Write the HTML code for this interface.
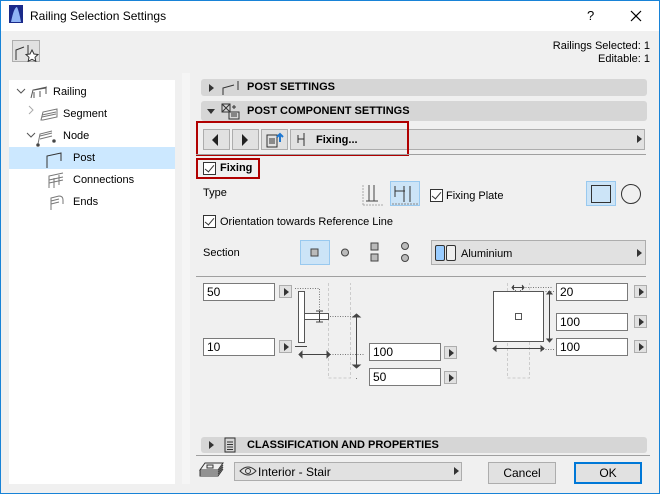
<!DOCTYPE html>
<html><head><meta charset="utf-8"><style>
*{box-sizing:border-box;margin:0;padding:0}
body{width:660px;height:494px;overflow:hidden;font-family:"Liberation Sans",sans-serif;font-size:11px;color:#000;background:#f0f0f0;position:relative}
.a{position:absolute}
.win{left:0;top:0;width:660px;height:494px;border:1px solid #1883d7}
.title{left:1px;top:1px;width:658px;height:30px;background:#fff}
.hdr{background:#d6d6d6;border-radius:3px;height:17px;font-weight:bold;font-size:11px;line-height:17px}
.btn{background:#e1e1e1;border:1px solid #adadad}
.inp{background:#fff;border:1px solid #7a7a7a;height:18px;line-height:16px;padding-left:3px;font-size:12px}
.sb{width:13px;height:13px;background:#e1e1e1;border:1px solid #adadad}
.sb:after{content:"";position:absolute;left:4px;top:2px;border-left:5px solid #333;border-top:4px solid transparent;border-bottom:4px solid transparent}
.cb{width:13px;height:13px;border:1px solid #333;background:#fff}
.cb:after{content:"";position:absolute;left:3px;top:0px;width:4px;height:8px;border-right:1.5px solid #333;border-bottom:1.5px solid #333;transform:rotate(40deg)}
.tri{border-left:5px solid #333;border-top:4px solid transparent;border-bottom:4px solid transparent;width:0;height:0}
.sel{background:#cce4f7;border:1px solid #99c9ef}
</style></head><body>
<div class="a win"></div>
<div class="a title"></div>
<svg class="a" style="left:9px;top:5px" width="14" height="18"><rect x="0" y="0" width="14" height="18" fill="#1a2a8a"/><path d="M2 17 Q5 2 8 2 Q10 6 12 17Z" fill="#8fb4f5"/></svg>
<div class="a" style="left:30px;top:9px;font-size:12px">Railing Selection Settings</div>
<div class="a" style="left:587px;top:8px;font-size:13px">?</div>
<svg class="a" style="left:630px;top:10px" width="12" height="12"><path d="M1 1L11 11M11 1L1 11" stroke="#000" stroke-width="1.2"/></svg>

<div class="a" style="left:12px;top:40px;width:28px;height:22px;background:#e1e1e1;border:1px solid #adadad"></div>
<svg class="a" style="left:14px;top:42px" width="26" height="20"><path d="M2 18V8L10 5M14 3V12" stroke="#333" fill="none"/><path d="M18 8l2 4 4 .5-3 2.8.8 4-3.8-2-3.8 2 .8-4-3-2.8 4-.5z" stroke="#333" fill="#fff"/></svg>
<div class="a" style="right:10px;top:40px;text-align:right;line-height:13px">Railings Selected: 1<br>Editable: 1</div>

<div class="a" style="left:9px;top:80px;width:166px;height:404px;background:#fff"></div>
<div class="a" style="left:182px;top:73px;width:8px;height:411px;background:#f5f5f5"></div>
<div class="a" style="left:9px;top:147px;width:166px;height:22px;background:#cce8ff"></div>
<svg class="a" style="left:14px;top:84px" width="160" height="130" fill="none" stroke="#555">
<path d="M3 5l4 4 4-4"/><path d="M17 14l2-8 14-3M20 6l12-2M20 8v6M26 7v6M32 4v6" />
<path d="M15 22l4 4-4 4" stroke="#aaa"/><path d="M27 36l2-8 14-3v8l-14 3zM28 31l14-3M28 33l14-3" stroke="#777"/>
<path d="M13 49l4 4 4-4"/><path d="M24 60l2-10 12-3M26 52l12-3M26 55l12-3" stroke="#777"/><circle cx="24" cy="61" r="1.3" fill="#333"/><circle cx="40" cy="57" r="1.3" fill="#333"/>
<path d="M33 84v-12l14-3v8" stroke="#333"/>
<path d="M35 104v-12l14-3M35 96l14-3M35 99l14-3M40 104v-10M45 101v-10" stroke="#777"/>
<path d="M37 126v-12l8-2q4 0 4 4v4M37 117l8-2M37 120l8-2" stroke="#777"/>
</svg>
<div class="a" style="left:53px;top:86px">Railing</div>
<div class="a" style="left:63px;top:108px">Segment</div>
<div class="a" style="left:63px;top:130px">Node</div>
<div class="a" style="left:73px;top:152px">Post</div>
<div class="a" style="left:73px;top:174px">Connections</div>
<div class="a" style="left:73px;top:196px">Ends</div>

<div class="a hdr" style="left:201px;top:79px;width:446px;padding-left:46px">POST SETTINGS</div>
<div class="a tri" style="left:209px;top:84px"></div>
<svg class="a" style="left:222px;top:80px" width="18" height="16"><path d="M1 15V8L12 5M16 1v9" stroke="#333" fill="none"/></svg>
<div class="a hdr" style="left:201px;top:101px;width:446px;height:20px;line-height:20px;padding-left:46px">POST COMPONENT SETTINGS</div>
<div class="a" style="left:207px;top:109px;border-top:5px solid #333;border-left:4px solid transparent;border-right:4px solid transparent"></div>
<svg class="a" style="left:221px;top:103px" width="20" height="17" fill="none" stroke="#333"><rect x="1" y="1" width="8" height="8"/><path d="M1 1l8 8M9 1L1 9"/><rect x="8" y="9" width="10" height="7"/><path d="M10 11h6M10 13h6M13 2v4M11 4h4"/></svg>

<div class="a btn" style="left:203px;top:129px;width:27px;height:21px"></div>
<div class="a" style="left:212px;top:134px;border-right:6px solid #222;border-top:6px solid transparent;border-bottom:6px solid transparent"></div>
<div class="a btn" style="left:232px;top:129px;width:27px;height:21px"></div>
<div class="a" style="left:242px;top:134px;border-left:6px solid #222;border-top:6px solid transparent;border-bottom:6px solid transparent"></div>
<div class="a btn" style="left:261px;top:129px;width:27px;height:21px"></div>
<svg class="a" style="left:265px;top:131px" width="20" height="17" fill="none"><rect x="2" y="4" width="10" height="12" stroke="#333"/><path d="M4 8h6M4 10h6M4 12h6" stroke="#333"/><path d="M15 11V3M12 6l3-3 3 3" stroke="#1f78d1" stroke-width="2"/></svg>
<div class="a btn" style="left:290px;top:129px;width:355px;height:21px"></div>
<svg class="a" style="left:297px;top:132px" width="12" height="15" fill="none" stroke="#333"><path d="M1 3v8M1 7h6M7 1v13" /></svg>
<div class="a" style="left:316px;top:134px;font-weight:bold">Fixing...</div>
<div class="a tri" style="left:637px;top:135px"></div>
<div class="a" style="left:196px;top:121px;width:213px;height:35px;border:2px solid #b00000"></div>
<div class="a" style="left:196px;top:154px;width:450px;height:1px;background:#a0a0a0"></div>
<div class="a" style="left:196px;top:158px;width:64px;height:21px;border:2px solid #b00000"></div>
<div class="a cb" style="left:203px;top:162px"></div>
<div class="a" style="left:220px;top:162px;font-weight:bold">Fixing</div>

<div class="a" style="left:203px;top:187px">Type</div>
<svg class="a" style="left:361px;top:181px" width="60" height="26" fill="none" stroke="#444"><path d="M2 4v20M2 24h20" stroke="#aaa" stroke-dasharray="2 1"/><path d="M8 4v16M13 4v16M5 20h12" /></svg>
<div class="a sel" style="left:390px;top:181px;width:30px;height:25px"></div>
<svg class="a" style="left:391px;top:182px" width="30" height="24" fill="none" stroke="#333"><path d="M4 4v11M4 9h10M13 4v16M19 4v16" /><path d="M1 22h26" stroke="#888" stroke-dasharray="2 1"/></svg>
<div class="a cb" style="left:430px;top:189px"></div>
<div class="a" style="left:446px;top:190px">Fixing Plate</div>
<div class="a sel" style="left:586px;top:181px;width:30px;height:25px"></div>
<div class="a" style="left:591px;top:185px;width:20px;height:18px;border:1px solid #333"></div>
<div class="a" style="left:621px;top:184px;width:20px;height:20px;border:1px solid #333;border-radius:50%"></div>
<div class="a cb" style="left:203px;top:215px"></div>
<div class="a" style="left:220px;top:216px">Orientation towards Reference Line</div>

<div class="a" style="left:203px;top:247px">Section</div>
<div class="a sel" style="left:300px;top:240px;width:30px;height:25px"></div>
<svg class="a" style="left:300px;top:240px" width="120" height="26" fill="#bbb" stroke="#444"><rect x="11" y="9" width="7" height="7"/><circle cx="45" cy="12.5" r="3.5"/><rect x="71" y="3" width="7" height="7"/><rect x="71" y="14" width="7" height="7"/><circle cx="105" cy="6" r="3.5"/><circle cx="105" cy="18" r="3.5"/></svg>
<div class="a btn" style="left:431px;top:240px;width:215px;height:25px"></div>
<div class="a" style="left:435px;top:245px;width:10px;height:16px;background:#99ccff;border:1px solid #333;border-radius:2px"></div>
<div class="a" style="left:446px;top:245px;width:10px;height:16px;background:#eee;border:1px solid #333;border-radius:2px"></div>
<div class="a" style="left:461px;top:248px">Aluminium</div>
<div class="a tri" style="left:637px;top:249px"></div>
<div class="a" style="left:196px;top:276px;width:450px;height:1px;background:#a0a0a0"></div>

<div class="a inp" style="left:203px;top:283px;width:72px">50</div><div class="a sb" style="left:279px;top:285px"></div>
<div class="a inp" style="left:203px;top:338px;width:72px">10</div><div class="a sb" style="left:279px;top:340px"></div>
<div class="a inp" style="left:369px;top:343px;width:72px">100</div><div class="a sb" style="left:444px;top:346px"></div>
<div class="a inp" style="left:369px;top:368px;width:72px">50</div><div class="a sb" style="left:444px;top:371px"></div>
<div class="a inp" style="left:556px;top:283px;width:72px">20</div><div class="a sb" style="left:634px;top:285px"></div>
<div class="a inp" style="left:556px;top:313px;width:72px">100</div><div class="a sb" style="left:634px;top:315px"></div>
<div class="a inp" style="left:556px;top:338px;width:72px">100</div><div class="a sb" style="left:634px;top:340px"></div>

<svg class="a" style="left:290px;top:280px" width="270" height="100" fill="none" stroke-width="1">
<g stroke="#ccc" stroke-dasharray="3 2"><path d="M38.5 3v95H60.5V3"/><path d="M217.5 3v95H239.5V3"/></g>
<g stroke="#777" stroke-dasharray="1 1.5"><path d="M5 8.5h24.5V31"/><path d="M40 36.5h26.5"/><path d="M40 74.5h34"/><path d="M66.5 98v8h9"/><path d="M225.5 10v22M230.5 10v22M233 7.5h30M253 11.5h12M253 69.5h12"/></g>
<rect x="8.5" y="11.5" width="6" height="51" fill="#fff" stroke="#555"/>
<rect x="14.5" y="33.5" width="24" height="6" fill="#fff" stroke="#555"/>
<rect x="203.5" y="11.5" width="50" height="50" fill="#fff" stroke="#555"/>
<rect x="225.5" y="33.5" width="6" height="6" fill="#fff" stroke="#555"/>
<g stroke="#444" fill="#444"><path d="M29.5 31v11"/><path d="M26 31h7M26 42h7"/><path d="M66.5 36v50"/><path d="M63 37l3.5-3 3.5 3zM63 85l3.5 3 3.5-3z"/><path d="M11 74.5h27"/><path d="M12 71.5l-3 3 3 3zM37 71.5l3 3-3 3z"/><path d="M5 66.5h12"/>
<path d="M223 7.5h10M224 5l-2 2.5 2 2.5M232 5l2 2.5-2 2.5"/><path d="M259.5 12v49"/><path d="M257 14l2.5-3 2.5 3zM257 59l2.5 3 2.5-3z"/><path d="M204 68.5h49"/><path d="M206 66l-3 2.5 3 2.5zM251 66l3 2.5-3 2.5z"/></g>
</svg>

<div class="a hdr" style="left:201px;top:437px;width:446px;height:16px;line-height:16px;padding-left:46px">CLASSIFICATION AND PROPERTIES</div>
<div class="a tri" style="left:209px;top:441px"></div>
<svg class="a" style="left:224px;top:437px" width="12" height="16" fill="none" stroke="#333"><rect x="1" y="1" width="10" height="14"/><path d="M3 5h6M3 7.5h6M3 10h6M3 12.5h6"/></svg>
<div class="a" style="left:196px;top:455px;width:454px;height:1px;background:#a0a0a0"></div>
<svg class="a" style="left:199px;top:462px" width="26" height="15" fill="none" stroke="#333"><path d="M6 1h18l-5 7H1zM1 8v2h18l5-7M1 10v2h18l5-7M1 12v2h18l5-7"/><rect x="8" y="3" width="6" height="3"/></svg>
<div class="a btn" style="left:234px;top:462px;width:228px;height:19px"></div>
<svg class="a" style="left:239px;top:465px" width="18" height="12" fill="none" stroke="#333"><path d="M1 6q8-8 16 0q-8 8-16 0z"/><circle cx="9" cy="6" r="2.5"/></svg>
<div class="a" style="left:258px;top:465px;font-size:12px">Interior - Stair</div>
<div class="a tri" style="left:454px;top:467px"></div>
<div class="a btn" style="left:488px;top:462px;width:68px;height:22px;text-align:center;line-height:20px;font-size:12px">Cancel</div>
<div class="a btn" style="left:574px;top:462px;width:68px;height:22px;text-align:center;line-height:18px;font-size:12px;border:2px solid #0078d7">OK</div>
</body></html>
